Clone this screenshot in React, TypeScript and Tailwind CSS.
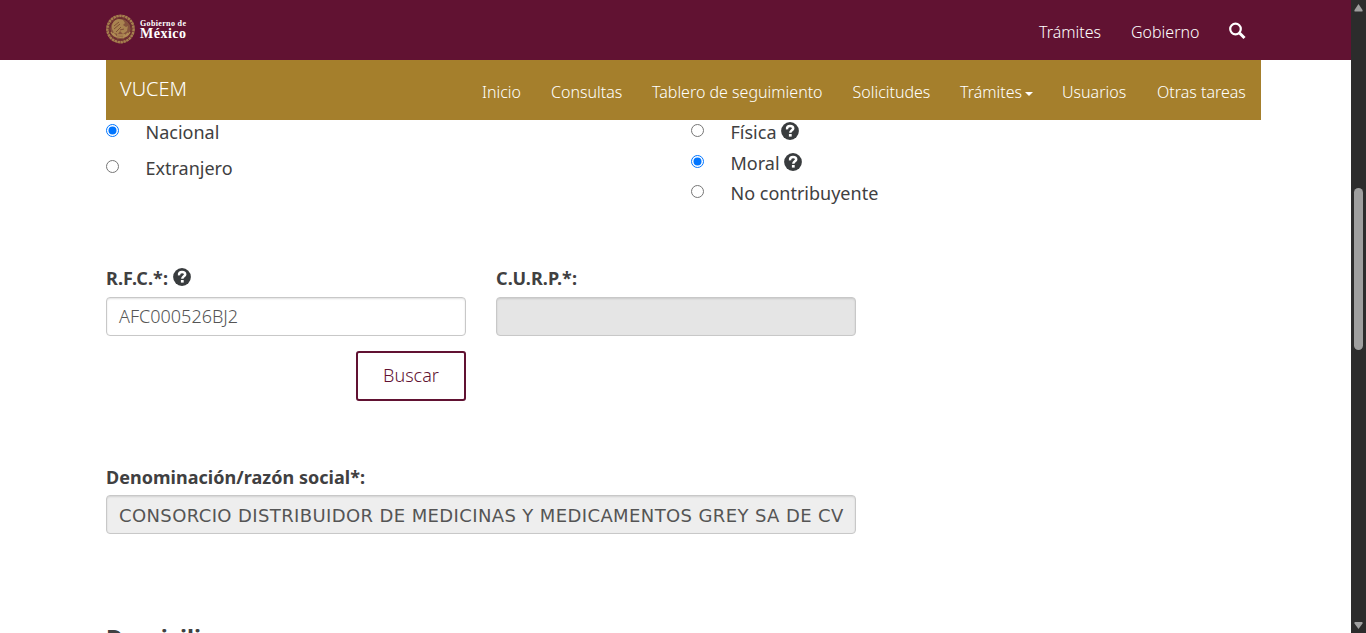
import React from "react";

const sans = "font-['Noto_Sans','Open_Sans',sans-serif]";

function HelpIcon() {
  return (
    <svg viewBox="0 0 18 18" className="h-[18px] w-[18px] shrink-0" aria-hidden="true">
      <circle cx="9" cy="9" r="8.9" fill="#393c3e" />
      <path d="M6.1 7.4 C5.7 4.9 7.2 4 9 4 C11.2 4 12.2 5.1 12.2 6.4 C12.2 8.4 9.3 8.2 9.3 10.8" fill="none" stroke="#fff" strokeWidth="2.5" />
      <rect x="7.9" y="12" width="2.8" height="2.6" fill="#fff" />
    </svg>
  );
}

function Radio({ checked = false }: { checked?: boolean }) {
  return (
    <svg viewBox="0 0 13 13" className="h-[13px] w-[13px] shrink-0" aria-hidden="true">
      <circle cx="6.5" cy="6.5" r="6" fill="#fff" stroke={checked ? "#0075ff" : "#767676"} />
      {checked && <circle cx="6.5" cy="6.5" r="4" fill="#0075ff" />}
    </svg>
  );
}

function Seal() {
  return (
    <svg viewBox="0 0 30 30" className="h-[30px] w-[30px]" fill="none" aria-hidden="true">
      <circle cx="14.5" cy="15" r="13.1" stroke="#a57f4d" strokeWidth="2.6" strokeDasharray="2.6 .4" />
      <circle cx="14.5" cy="15" r="11.2" stroke="#74402f" strokeWidth="1" />
      <circle cx="14.5" cy="15" r="10.3" fill="#85533d" />
      <path d="M6 15 C5 9 9 5 13 5 L17 6 L19 9 L17 11 L20 13 L22 12 L21 17 L17 20 L14 17 L12 20 L8 19 Z" fill="#a98450" />
      <path d="M8 12 L13 8 M8 15 L14 10 M10 18 L15 13 M14 16 L18 15" stroke="#74402f" strokeWidth=".8" />
      <path d="M5 18 C8 25 21 25 24 18 M7 19 L10 22 M18.5 20 L17.5 24 M22 19 L19 22 M11 21 H19" stroke="#b18c55" strokeWidth="1.3" />
    </svg>
  );
}

function NavItem({ label, className, caret = false }: { label: string; className: string; caret?: boolean }) {
  return (
    <a className={`flex h-6 items-center whitespace-nowrap ${className}`}>
      <span>{label}</span>
      {caret && <span className="ml-[3px] mt-[3px] h-0 w-0 border-x-4 border-t-4 border-x-transparent border-t-white" />}
    </a>
  );
}

function Choice({ label, checked, help }: { label: string; checked?: boolean; help?: boolean }) {
  return (
    <label className="flex items-start">
      <span className="pt-[6px]"><Radio checked={checked} /></span>
      <span className="ml-[26.5px] whitespace-nowrap leading-[28px]">{label}</span>
      {help && <span className="ml-[4.5px] mt-[4px]"><HelpIcon /></span>}
    </label>
  );
}

const field = "flex h-[39px] items-center overflow-hidden whitespace-nowrap rounded-[4px] border border-[#c8c8c8] px-[12px] text-[18px] text-[#555] shadow-[inset_0_1px_2px_rgba(0,0,0,0.12)]";

function Scrollbar() {
  return (
    <div className="flex h-full w-[15px] shrink-0 flex-col items-center bg-[#2c2c2c]">
      <svg viewBox="0 0 15 16" className="h-4 w-[15px] shrink-0" aria-hidden="true"><path d="M7.5 4 L11.5 10 Q12 11.5 11 11.5 H4 Q3 11.5 3.5 10 Z" fill="#9f9f9f" /></svg>
      <div className="mt-[172px] h-[162px] w-[9px] rounded-full bg-[#9f9f9f]" />
      <svg viewBox="0 0 15 16" className="mt-auto h-4 w-[15px] shrink-0" aria-hidden="true"><path d="M7.5 12 L11.5 6.5 Q12 5 11 5 H4 Q3 5 3.5 6.5 Z" fill="#9f9f9f" /></svg>
    </div>
  );
}

export default function App() {
  return (
    <div className={`flex h-[633px] w-[1366px] overflow-hidden bg-white text-[#404041] ${sans}`}>
      <div className="flex h-full w-[1351px] flex-col overflow-hidden">
        <header className="flex h-[60px] shrink-0 items-start bg-[#611232] pl-[106px] pr-[104px] text-white">
          <div className="flex pt-[14px]">
            <Seal />
            <div className="ml-[4px] pt-[5px] font-['Liberation_Serif',serif] font-bold">
              <div className="text-[8px] leading-[9px] tracking-[0.35px]">Gobierno de</div>
              <div className="text-[14px] leading-[11px] tracking-[0.5px]">México</div>
            </div>
          </div>
          <nav className="ml-auto flex pt-[20px] text-[16px] font-light leading-6">
            <NavItem label="Trámites" className="w-[92px]" />
            <NavItem label="Gobierno" className="w-[98px]" />
            <svg viewBox="0 0 18 18" className="mt-[2px] h-[18px] w-[18px]" fill="none" stroke="#fff" aria-hidden="true">
              <circle cx="6.5" cy="7" r="5.3" strokeWidth="2.2" />
              <path d="M10.5 11 L15.5 16" strokeWidth="3" />
            </svg>
          </nav>
        </header>

        <div className="ml-[106px] flex h-[60px] w-[1155px] shrink-0 bg-[#a57f2c] pl-[14px] text-white">
          <div className="pt-[14px] text-[20px] font-light leading-[30px]">VUCEM</div>
          <nav className="ml-auto flex pt-[20px] text-[16px] font-light leading-6">
            <NavItem label="Inicio" className="w-[69px]" />
            <NavItem label="Consultas" className="w-[101px]" />
            <NavItem label="Tablero de seguimiento" className="w-[200.5px]" />
            <NavItem label="Solicitudes" className="w-[107.5px]" />
            <NavItem label="Trámites" caret className="w-[102px]" />
            <NavItem label="Usuarios" className="w-[95px]" />
            <NavItem label="Otras tareas" className="w-[104px]" />
          </nav>
        </div>

        <main className="ml-[106px] flex w-[1155px] flex-col text-[18px]">
          <div className="-mt-[2px] flex h-[148px]">
            <div className="w-[585px]">
              <div className="h-[36px]"><Choice label="Nacional" checked /></div>
              <div className="h-[36px]"><Choice label="Extranjero" /></div>
            </div>
            <div>
              <div className="h-[31px]"><Choice label="Física" help /></div>
              <div className="h-[30px]"><Choice label="Moral" checked help /></div>
              <div className="h-[30px]"><Choice label="No contribuyente" /></div>
            </div>
          </div>

          <div className="flex gap-[30px]">
            <div className="w-[360px]">
              <div className="flex h-[31px] items-start gap-[5px] font-bold leading-[24px]">
                <span className="tracking-[0.1px]">R.F.C.*:</span>
                <span className="pt-[2px]"><HelpIcon /></span>
              </div>
              <div className={`${field} bg-white font-light`}>AFC000526BJ2</div>
              <button className="ml-auto mt-[15px] flex h-[50px] w-[110px] items-center justify-center rounded-[3px] border-2 border-[#611232] pb-[2px] text-[18px] font-light text-[#611232]">Buscar</button>
            </div>
            <div className="w-[360px]">
              <div className="h-[31px] font-bold leading-[24px] tracking-[0.1px]">C.U.R.P.*:</div>
              <div className={`${field} bg-[#e5e5e5]`} />
            </div>
          </div>

          <div className="mt-[64px] w-[750px]">
            <div className="h-[30px] font-bold leading-[24px] tracking-[0.03px]">Denominación/razón social*:</div>
            <div className={`${field} bg-[#eee] font-['DejaVu_Sans',sans-serif]`}>
              <span className="w-[726px] shrink-0 pt-[2px] tracking-[0.385px]">CONSORCIO DISTRIBUIDOR DE MEDICINAS Y MEDICAMENTOS GREY SA DE CV</span>
            </div>
          </div>

          <h2 className="mt-[86px] text-[23.5px] font-bold leading-[37px]">Domicilio</h2>
        </main>
      </div>
      <Scrollbar />
    </div>
  );
}
